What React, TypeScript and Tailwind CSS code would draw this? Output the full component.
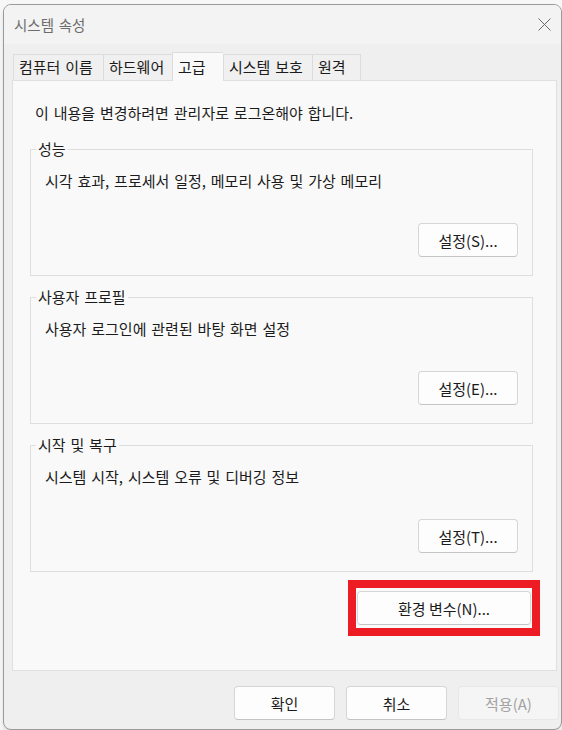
const font = "font-['Noto_Sans_CJK_KR','Noto_Sans',sans-serif] [word-spacing:1.5px]";

const tabs = [
  { label: "컴퓨터 이름", w: "w-[90px]" },
  { label: "하드웨어", w: "w-[69px]" },
  { label: "고급", w: "w-[51px]", active: true },
  { label: "시스템 보호", w: "w-[89px]" },
  { label: "원격", w: "w-[49px] border-r" },
];

const groups = [
  { title: "성능", desc: "시각 효과, 프로세서 일정, 메모리 사용 및 가상 메모리", btn: "설정(S)..." },
  { title: "사용자 프로필", desc: "사용자 로그인에 관련된 바탕 화면 설정", btn: "설정(E)..." },
  { title: "시작 및 복구", desc: "시스템 시작, 시스템 오류 및 디버깅 정보", btn: "설정(T)..." },
];

const Button = ({ children, className = "", disabled = false }: { children: React.ReactNode; className?: string; disabled?: boolean }) => (
  <button
    disabled={disabled}
    className={`h-[34px] rounded-[4px] border text-[15px] leading-none ${
      disabled
        ? "border-[#e8e8e8] bg-[#f5f5f5] text-[#a2a2a2]"
        : "border-[#d6d6d6] border-b-[#c4c4c4] bg-[#fdfdfd] text-[#1b1b1b]"
    } ${className}`}
  >
    {children}
  </button>
);

export default function App() {
  return (
    <div className={`h-[730px] w-[562px] overflow-hidden bg-[#f7f7f7] pl-[3px] pt-[4px] ${font}`}>
      <div className="h-[726px] w-[559px] overflow-hidden rounded-[8px] border border-[#9a9a9a] bg-[#efefef] shadow-md">
        {/* Title bar */}
        <div className="flex h-[39px] items-center justify-between bg-[#f3f3f3] pl-[10px] pr-[10px]">
          <span className="text-[14.5px] text-[#6c6c6c]">시스템 속성</span>
          <svg width="13" height="13" viewBox="0 0 13 13">
            <path d="M0.5 0.5 L12.5 12.5 M12.5 0.5 L0.5 12.5" stroke="#6a6a6a" strokeWidth="1" fill="none" />
          </svg>
        </div>

        {/* Tabs */}
        <div className="ml-[9px] flex items-end pt-[8px]">
          {tabs.map((t) => (
            <div
              key={t.label}
              className={`${t.w} border-l border-t border-[#dcdcdc] pl-[5px] text-[15px] leading-[22px] whitespace-nowrap text-[#1b1b1b] ${
                t.active
                  ? "relative z-10 -mb-px h-[29px] bg-[#f9f9f9] pt-[3px]"
                  : "h-[26px] bg-[#f0f0f0] pt-[1px]"
              }`}
            >
              {t.label}
            </div>
          ))}
        </div>

        {/* Panel */}
        <div className="ml-[8px] h-[591px] w-[545px] border border-[#e0e0e0] bg-[#f9f9f9] pt-[22px]">
          <p className="pl-[22px] text-[15px] leading-[20px] text-[#1b1b1b]">
            이 내용을 변경하려면 관리자로 로그온해야 합니다.
          </p>

          <div className="ml-[17px] mr-[23px] mt-[16px] flex flex-col gap-[11px]">
            {groups.map((g) => (
              <fieldset key={g.title} className="border border-[#dedede]">
                <legend className="ml-[5px] px-[2px] text-[15px] leading-[20px] text-[#1b1b1b]">{g.title}</legend>
                <div className="flex h-[116px] flex-col pl-[14px] pr-[14px] pb-[18px]">
                  <p className="mt-[12px] text-[15px] leading-[20px] text-[#1b1b1b]">{g.desc}</p>
                  <div className="mt-auto flex justify-end">
                    <Button className="w-[100px]">{g.btn}</Button>
                  </div>
                </div>
              </fieldset>
            ))}
          </div>

          <div className="mr-[16px] mt-[8px] flex justify-end">
            <div className="h-[56px] w-[192px] border-[8px] border-[#ed1c24]">
              <Button className="ml-[1px] mt-[3px] w-[174px]">환경 변수(N)...</Button>
            </div>
          </div>
        </div>

        {/* Bottom buttons */}
        <div className="mr-[2px] mt-[15px] flex justify-end gap-[11px]">
          <Button className="w-[101px]">확인</Button>
          <Button className="w-[101px]">취소</Button>
          <Button className="w-[101px]" disabled>
            적용(A)
          </Button>
        </div>
      </div>
    </div>
  );
}
